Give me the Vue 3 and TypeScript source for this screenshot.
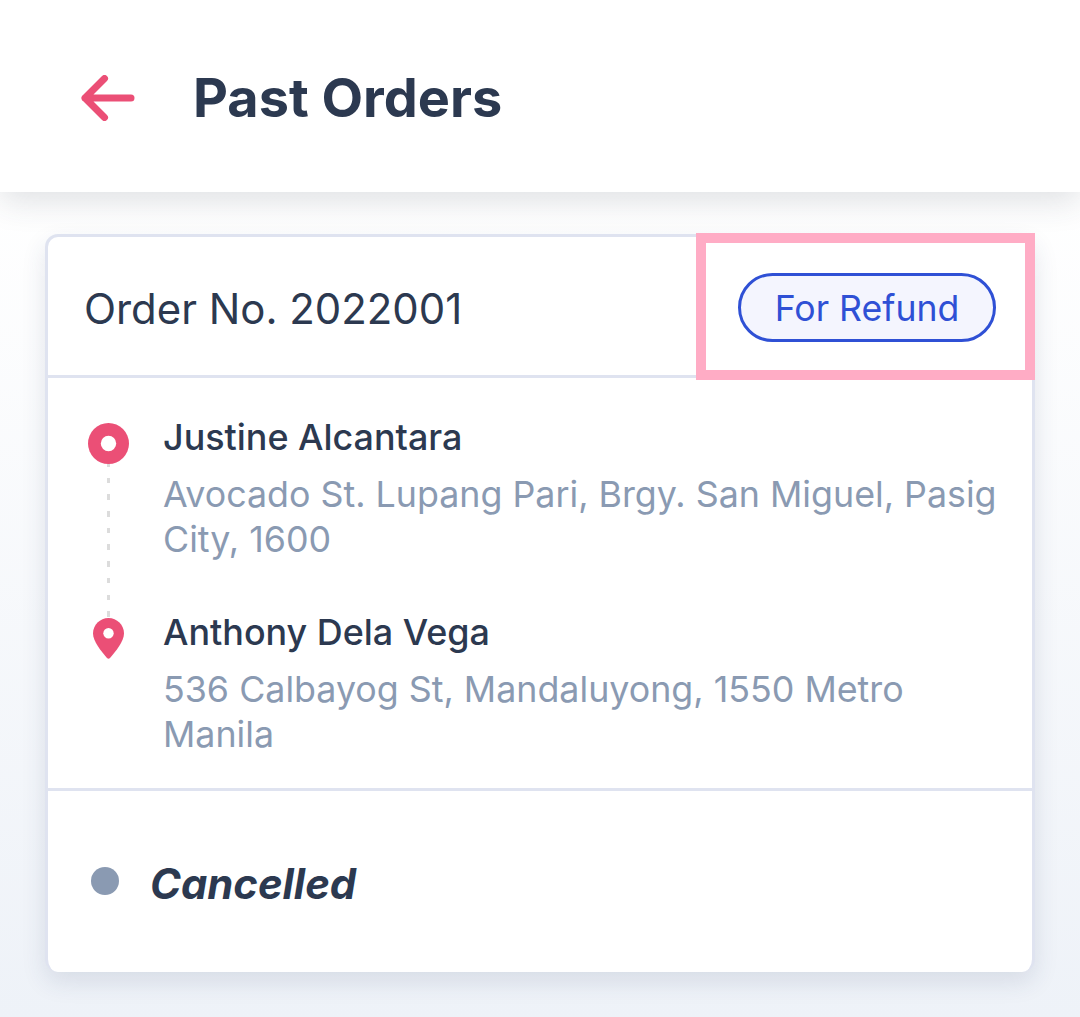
<script setup lang="ts">
interface Stop { name: string; address: string; kind: 'origin' | 'pin' }
const stops: Stop[] = [
  { name: 'Justine Alcantara', address: 'Avocado St. Lupang Pari, Brgy. San Miguel, Pasig City, 1600', kind: 'origin' },
  { name: 'Anthony Dela Vega', address: '536 Calbayog St, Mandaluyong, 1550 Metro Manila', kind: 'pin' },
]
</script>

<template>
  <div class="page">
    <header class="topbar">
      <svg class="back" width="54" height="46" viewBox="0 0 54 46" fill="none" aria-hidden="true">
        <path d="M23.5 3.5 L4 23 L23.5 42.5 M4 23 H50" stroke="#eb4f76" stroke-width="7" stroke-linecap="round" stroke-linejoin="round" />
      </svg>
      <h1 class="title">Past Orders</h1>
    </header>

    <main class="content">
      <section class="card">
        <div class="card-head">
          <span class="order-no">Order No. 2022001</span>
          <span class="badge">For Refund</span>
        </div>
        <div class="route">
          <div class="connector"></div>
          <div v-for="s in stops" :key="s.name" class="stop">
            <div class="marker">
              <svg v-if="s.kind === 'origin'" width="41" height="41" viewBox="0 0 41 41" aria-hidden="true">
                <circle cx="20.5" cy="20.5" r="20.5" fill="#eb4f76" />
                <circle cx="20.5" cy="20.5" r="7.7" fill="#fff" />
              </svg>
              <svg v-else width="31" height="41" viewBox="0 0 31 41" aria-hidden="true">
                <path d="M15.5 0 C24 0 31 6.9 31 15.4 C31 23 23 33 17 40 Q15.5 41.6 14 40 C8 33 0 23 0 15.4 C0 6.9 7 0 15.5 0 Z" fill="#eb4f76" />
                <circle cx="15.5" cy="15.2" r="5.2" fill="#fff" />
              </svg>
            </div>
            <div class="stop-text">
              <div class="name">{{ s.name }}</div>
              <div class="address">{{ s.address }}</div>
            </div>
          </div>
        </div>
        <div class="status">
          <span class="dot"></span>
          <span class="status-text">Cancelled</span>
        </div>
        <div class="highlight"></div>
      </section>
    </main>
  </div>
</template>

<style>
html, body { margin: 0; padding: 0; }
</style>

<style scoped>
.page {
  width: 1080px;
  height: 1017px;
  overflow: hidden;
  font-family: Inter, "Liberation Sans", sans-serif;
  background: linear-gradient(180deg, #ffffff 192px, #eef2f8 100%);
  color: #2c3950;
  box-sizing: border-box;
}
.topbar {
  position: relative;
  height: 192px;
  box-sizing: border-box;
  display: flex;
  align-items: center;
  padding-left: 81px;
  background: #fff;
  box-shadow: 0 8px 32px rgba(45, 55, 72, 0.16);
}
.back { flex: none; margin-top: 4px; }
.title {
  margin: 4px 0 0 58px;
  font-size: 54px;
  line-height: 64px;
  font-weight: 700;
  color: #2c3950;
}
.content { padding: 42px 45px 0 45px; }
.card {
  position: relative;
  width: 990px;
  height: 738px;
  box-sizing: border-box;
  background: #fff;
  border: 3px solid #dfe3f0;
  border-bottom: 0;
  border-radius: 13px;
  box-shadow: 0 10px 24px rgba(45, 55, 100, 0.12);
}
.card-head {
  height: 141px;
  box-sizing: border-box;
  display: flex;
  align-items: center;
  justify-content: space-between;
  padding: 2px 36px 0 36px;
  border-bottom: 3px solid #dfe3f0;
}
.order-no { font-size: 41.9px; line-height: 48px; padding-top: 3px; color: #2c3950; }
.badge {
  box-sizing: border-box;
  width: 258px;
  height: 69px;
  padding-top: 2px;
  display: flex;
  align-items: center;
  justify-content: center;
  font-size: 35.6px;
  color: #2f50d5;
  background: #f4f5fe;
  border: 3px solid #2f50d5;
  border-radius: 35px;
}
.route {
  position: relative;
  height: 413px;
  box-sizing: border-box;
  padding: 36px 21px 0 40px;
  border-bottom: 3px solid #dfe3f0;
  display: flex;
  flex-direction: column;
  gap: 47px;
}
.connector {
  position: absolute;
  left: 59px;
  top: 83px;
  width: 3px;
  height: 156px;
  background: repeating-linear-gradient(180deg, #dcdcdc 0, #dcdcdc 5.5px, transparent 5.5px, transparent 16.7px);
}
.stop { display: flex; position: relative; }
.marker { width: 41px; flex: none; display: flex; justify-content: center; margin-right: 34px; padding-top: 9px; }
.stop-text { flex: 1; }
.name { font-size: 35.9px; line-height: 45px; padding-top: 1px; font-weight: 500; color: #2c3950; }
.address { font-size: 35.8px; line-height: 45px; margin-top: 12px; color: #8a9ab2; }
.status {
  display: flex;
  align-items: center;
  height: 179px;
  padding-left: 43px;
}
.dot { width: 28px; height: 28px; border-radius: 50%; background: #8a9ab2; margin-right: 31px; }
.status-text { font-size: 41.8px; padding-top: 6px; font-weight: 700; font-style: italic; color: #2c3950; }
.highlight {
  position: absolute;
  left: 648px;
  top: -4px;
  width: 339px;
  height: 147px;
  box-sizing: border-box;
  border: 10px solid #ffacc5;
}
</style>
